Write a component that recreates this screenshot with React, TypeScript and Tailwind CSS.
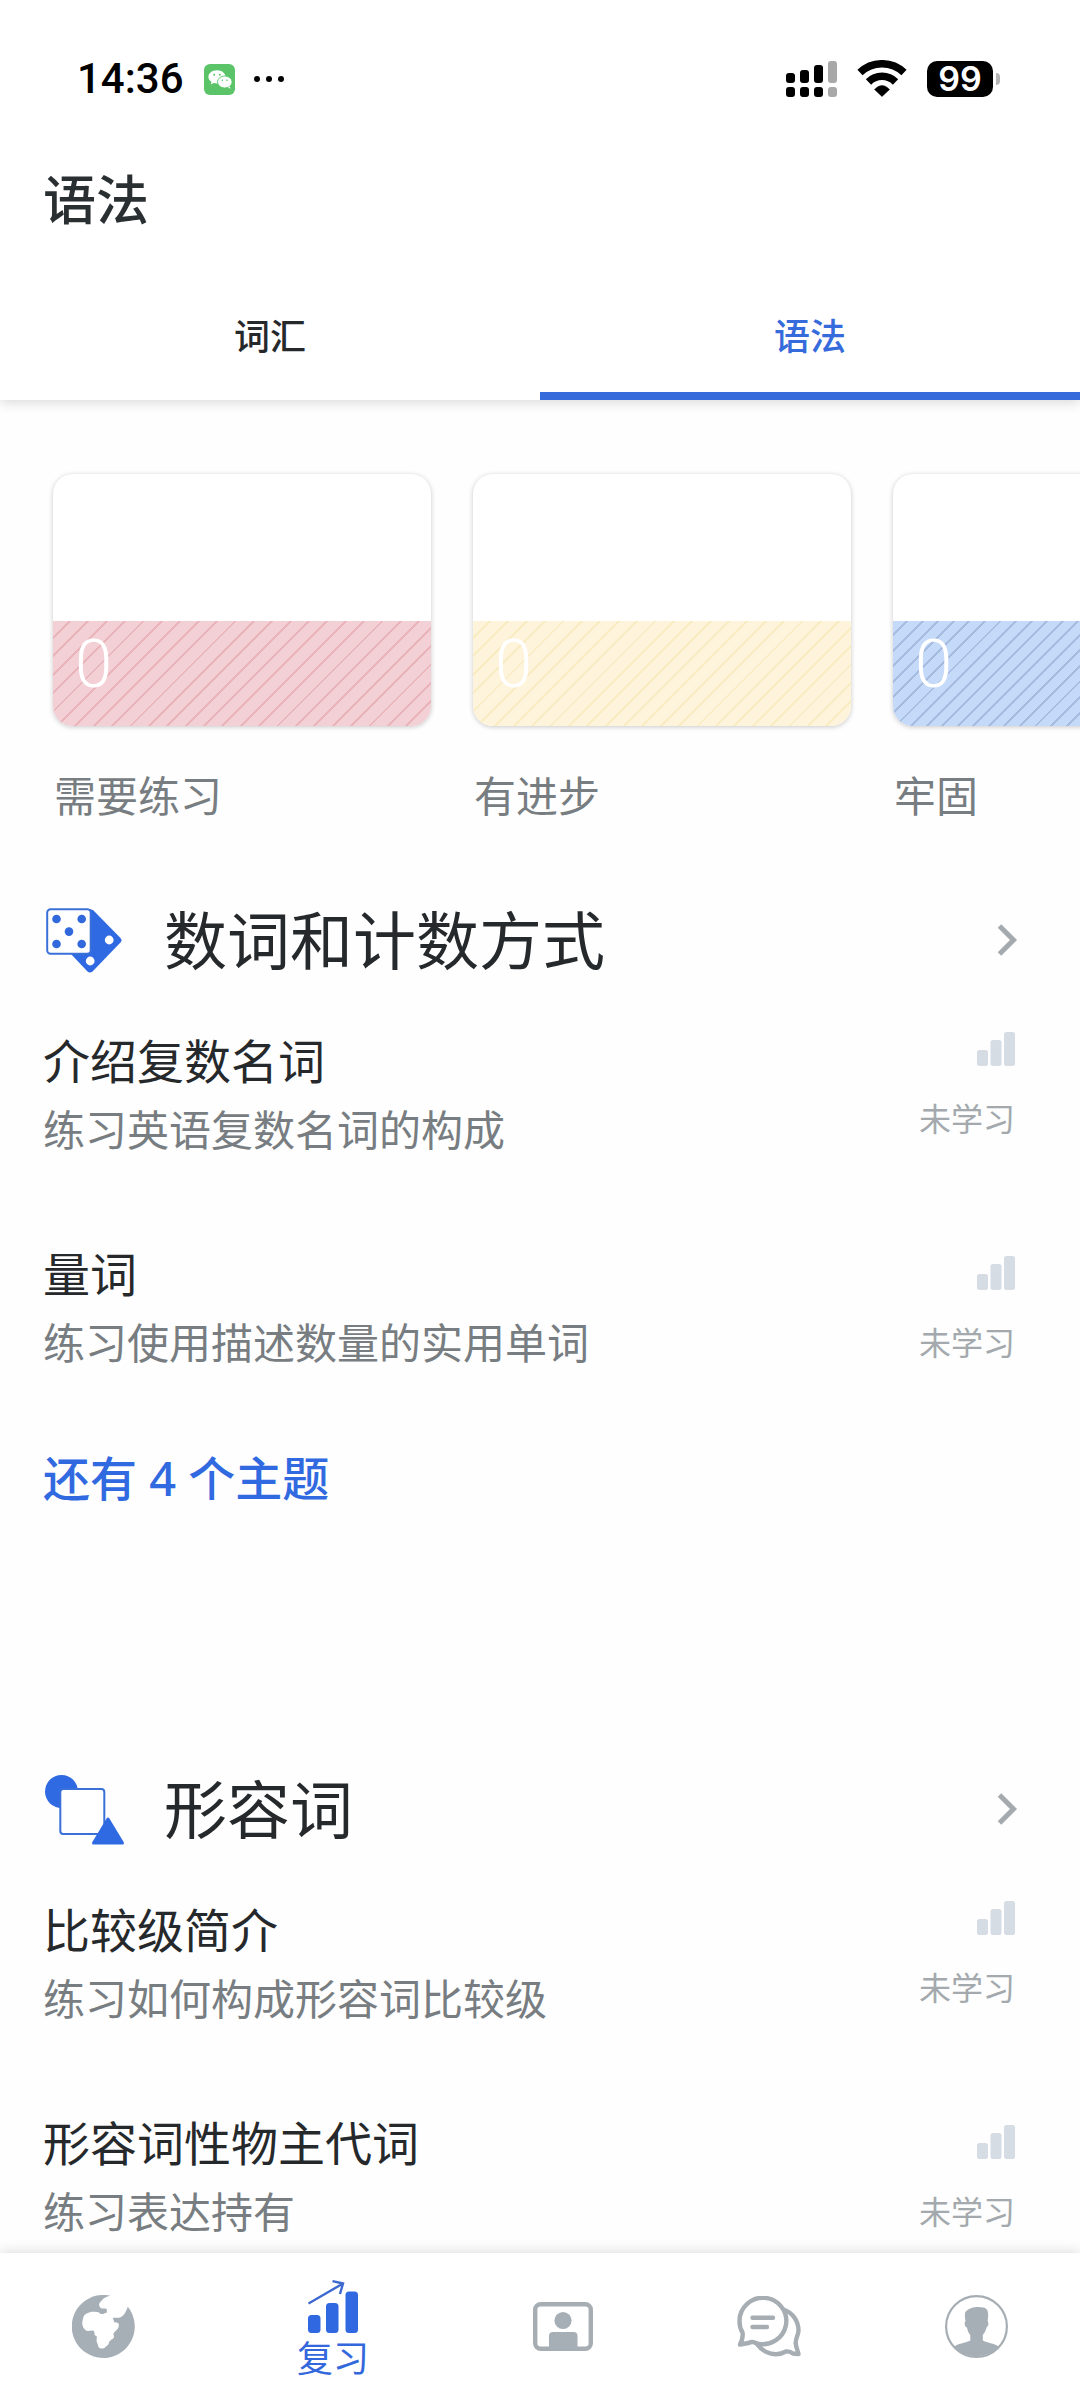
import React from "react";
import clsx from "clsx";

type Topic = { title: string; desc: string };

const levels = [
  {
    label: "需要练习",
    count: 0,
    fill: "bg-[repeating-linear-gradient(135deg,#f3d0d5_0px,#f3d0d5_11px,#e9b5ba_11px,#e9b5ba_13px)]",
  },
  {
    label: "有进步",
    count: 0,
    fill: "bg-[repeating-linear-gradient(135deg,#fef3db_0px,#fef3db_11px,#f9ebc2_11px,#f9ebc2_13px)]",
  },
  {
    label: "牢固",
    count: 0,
    fill: "bg-[repeating-linear-gradient(135deg,#c5d9f8_0px,#c5d9f8_9px,#a6bce0_9px,#a6bce0_11px)]",
  },
];

const numberTopics: Topic[] = [
  { title: "介绍复数名词", desc: "练习英语复数名词的构成" },
  { title: "量词", desc: "练习使用描述数量的实用单词" },
];

const adjectiveTopics: Topic[] = [
  { title: "比较级简介", desc: "练习如何构成形容词比较级" },
  { title: "形容词性物主代词", desc: "练习表达持有" },
];

function WeChatIcon() {
  return (
    <svg width="31" height="31" viewBox="0 0 31 31" aria-hidden="true">
      <rect width="31" height="31" rx="6" fill="#5bc468" />
      <path
        d="M13 6.2c-4.8 0-8.6 2.9-8.6 6.6 0 2.1 1.2 3.9 3.1 5.1l-.8 2.5 2.9-1.5c1.1.3 2.2.5 3.4.5 4.8 0 8.6-2.9 8.6-6.6S17.8 6.2 13 6.2z"
        fill="#fff"
      />
      <ellipse cx="20.8" cy="18" rx="7.3" ry="6" fill="#fff" stroke="#5bc468" strokeWidth="0.9" />
      <path d="M23.5 22.5l2.5.3.3 2.3z" fill="#fff" />
      <circle cx="10.2" cy="10.7" r="1" fill="#5bc468" />
      <circle cx="15.8" cy="10.7" r="1" fill="#5bc468" />
      <circle cx="18.4" cy="16.3" r="0.8" fill="#5bc468" />
      <circle cx="23" cy="16.3" r="0.8" fill="#5bc468" />
    </svg>
  );
}

function SignalIcon() {
  return (
    <svg width="51" height="36" viewBox="0 0 51 36" aria-hidden="true">
      <g fill="#000">
        <rect x="0" y="12" width="9" height="10" rx="3" />
        <rect x="14" y="9" width="9" height="13" rx="3" />
        <rect x="28" y="4" width="9" height="18" rx="3" />
        <rect x="0" y="26" width="9" height="10" rx="3" />
        <rect x="14" y="26" width="9" height="10" rx="3" />
        <rect x="28" y="26" width="9" height="10" rx="3" />
      </g>
      <g fill="#a8a8a8">
        <rect x="42" y="0" width="9" height="22" rx="3" />
        <rect x="42" y="26" width="9" height="10" rx="3" />
      </g>
    </svg>
  );
}

function WifiIcon() {
  return (
    <svg width="50" height="38" viewBox="0 0 50 38" fill="none" aria-hidden="true">
      <path d="M3 12.5A32 32 0 0 1 47 12.5" stroke="#000" strokeWidth="7.5" />
      <path d="M11.5 22A19 19 0 0 1 38.5 22" stroke="#000" strokeWidth="7.5" />
      <path d="M17.5 29.500Q25 21.500 32.500 29.500L25 36.500z" fill="#000" stroke="#000" strokeWidth="0.5" />
    </svg>
  );
}

function DiceIcon() {
  return (
    <svg width="77" height="66" viewBox="-1 0 77 66" aria-hidden="true">
      <path
        d="M42 2Q45.5 1.5 47.5 3.5L74.5 31Q76.5 33.3 74.5 35.5L46.5 64.5Q44 66.5 41.5 64.5L24 46z"
        fill="#2f6ae3"
      />
      <rect x="1.2" y="2.2" width="43.5" height="44.5" rx="3.5" fill="#fff" stroke="#3a70d8" strokeWidth="2" />
      <g fill="#3169dc">
        <circle cx="10.5" cy="12" r="4.3" />
        <circle cx="35.7" cy="12" r="4.3" />
        <circle cx="23" cy="24.6" r="4.3" />
        <circle cx="10.5" cy="37" r="4.3" />
        <circle cx="35.7" cy="37" r="4.3" />
      </g>
      <circle cx="63.2" cy="33" r="4.4" fill="#fff" />
      <circle cx="44.2" cy="54" r="4.4" fill="#fff" />
    </svg>
  );
}

function ShapesIcon() {
  return (
    <svg width="80" height="71" viewBox="1 0 80 71" aria-hidden="true">
      <circle cx="17.5" cy="17.5" r="16.5" fill="#2f6ae3" />
      <rect x="16.3" y="15" width="44" height="45" rx="3" fill="#fff" stroke="#3a70d8" strokeWidth="2" />
      <path d="M64 45L78.5 69H49.5z" fill="#2f6ae3" stroke="#2f6ae3" strokeWidth="3" strokeLinejoin="round" />
    </svg>
  );
}

function ChevronIcon() {
  return (
    <svg width="21" height="34" viewBox="0 0 21 34" fill="none" className="overflow-visible" aria-hidden="true">
      <path d="M4.5 3L18.5 17L4.5 31" stroke="#a5aaae" strokeWidth="5" />
    </svg>
  );
}

function BarsIcon() {
  return (
    <svg width="38" height="34" viewBox="0 0 38 34" fill="#d6dce4" aria-hidden="true">
      <rect x="0" y="18" width="11" height="16" rx="2.5" />
      <rect x="13.5" y="8" width="11" height="26" rx="2.5" />
      <rect x="27" y="0" width="11" height="34" rx="2.5" />
    </svg>
  );
}

function GlobeIcon() {
  return (
    <svg width="63" height="63" viewBox="0 0 63 63" aria-hidden="true">
      <path
        d="M38.5 .8C34 1.6 31 3.5 29.6 5.7C26.5 8 26.5 11 28.5 12.7C30 14.3 31.5 13 34.8 14V17.7C32 18 31.5 19.5 29.3 19C27 18.5 27.5 17 25 17C22 16.7 20.5 16.4 18 17.2C13.5 18.3 11.5 20.5 11.2 23C10.7 25 10 27 10.3 29C10.7 32 12 34.5 14.5 35.7C17 36.7 20 34.5 21.7 36C23.3 37.6 21.7 39 23 40.5C26 41 24.5 43 24.5 45C24.5 47.5 26 49 26.3 51.5C27 54 31.5 54 33 52.5C34.5 50.5 36.5 50.5 36.8 48.3C36.8 46.5 38 46 39.5 44.5C42 43.5 42.5 41.5 41.5 40C41 37.5 43 37 44.5 35C46.5 33.5 47 31.5 46.7 29C46.3 27 43.5 28 41.7 27C42.5 25 41 25 41 23C43.5 22.3 45.5 23.3 48 22.5C52 21 54 16.5 55.8 11.7A31.5 31.5 0 1 1 38.5 .8z"
        fill="#a6aeb6"
      />
    </svg>
  );
}

function ReviewIcon() {
  return (
    <svg width="50" height="53" viewBox="0 0 50 53" aria-hidden="true">
      <g fill="#3068e2">
        <rect x="0" y="35" width="12.5" height="18" rx="3.5" />
        <rect x="18" y="23" width="12.5" height="30" rx="3.5" />
        <rect x="37.5" y="11.5" width="12.5" height="41.5" rx="3.5" />
      </g>
      <path d="M.5 23.5L35 3.5M24.5 1.2L35 3.5L32 14" fill="none" stroke="#3c68cf" strokeWidth="2.4" />
    </svg>
  );
}

function TeacherIcon() {
  return (
    <svg width="60" height="49" viewBox="0 0 60 49" aria-hidden="true">
      <rect x="2.2" y="2.2" width="55.6" height="44.6" rx="5.5" fill="none" stroke="#a6aeb4" strokeWidth="4.4" />
      <circle cx="30" cy="18.5" r="8.6" fill="#a6aeb6" />
      <path d="M16 47V34Q16 30 20 30H40.5Q44.5 30 44.5 34V47z" fill="#a6aeb6" />
    </svg>
  );
}

function ChatIcon() {
  return (
    <svg
      width="65"
      height="61"
      viewBox="0 0 65 61"
      fill="none"
      stroke="#a6aeb4"
      strokeWidth="4.4"
      strokeLinecap="round"
      strokeLinejoin="round"
      aria-hidden="true"
    >
      <path d="M5.5 36.5C3.4 33.2 2.5 29 2.5 25A23.4 23.2 0 1 1 19.5 47.3Q15.5 44.7 11.5 47L3 48.5Q6.5 41 5.5 36.5z" />
      <path d="M47.5 14C56 17 61.5 25.5 61.5 34.5C61.5 39 58.5 42 58.7 47C59 51 60.5 54 61.5 58L56 57.5Q53 55 49 55.5C40 60.5 28 59 19.5 47.5" />
      <path d="M15.5 21.7H36M15.5 31H30" />
    </svg>
  );
}

function ProfileIcon() {
  return (
    <svg width="63" height="63" viewBox="0 0 63 63" aria-hidden="true">
      <circle cx="31.5" cy="31.5" r="30.4" fill="none" stroke="#a6aeb4" strokeWidth="2.2" />
      <path
        d="M20.5 26C19.5 21 19.5 17 21.5 16C24 12.5 33 11 38 12.5C43.5 13.5 43.8 18 42.6 26C44 27.5 43.5 31.5 41.5 32.5C40.5 36.5 39 38.5 37.8 40V45.5C42 48 49 48 54 51.7A31.5 31.5 0 0 1 9 51.7C14 48 21 48 25.3 45.5V40C23.5 38 22.5 35.5 22 32.5C19.5 31.5 19 28 20.5 26z"
        fill="#a6aeb6"
      />
    </svg>
  );
}

function StatusBar() {
  return (
    <div className="flex h-[110px] items-center justify-between pt-12 pr-20 pl-[77px]">
      <div className="flex items-center">
        <span className="font-[Roboto] text-[42px] leading-[62px] font-medium text-black">
          14:36
        </span>
        <div className="ml-5 flex items-center gap-[19px]">
          <WeChatIcon />
          <div className="flex gap-1.5">
            <span className="size-1.5 rounded-full bg-black" />
            <span className="size-1.5 rounded-full bg-black" />
            <span className="size-1.5 rounded-full bg-black" />
          </div>
        </div>
      </div>
      <div className="flex items-center gap-5">
        <SignalIcon />
        <WifiIcon />
        <div className="flex items-center gap-[3px]">
          <span className="flex h-9 w-[66px] items-center justify-center rounded-[10px] bg-black font-[Inter] text-[34px] leading-9 font-semibold text-white">
            99
          </span>
          <span className="h-3 w-1 rounded-r-full bg-[#b5b5b5]" />
        </div>
      </div>
    </div>
  );
}

function LevelCards() {
  return (
    <ul className="flex gap-[42px] overflow-x-auto px-[53px] pt-[74px] [scrollbar-width:none]">
      {levels.map((level) => (
        <li key={level.label} className="w-[378px] shrink-0">
          <div className="flex h-[252px] flex-col justify-end overflow-hidden rounded-[20px] bg-white shadow-[0_1px_5px_rgba(0,0,0,0.22)]">
            <div className={clsx("flex h-[105px] items-start px-[22px] pt-2", level.fill)}>
              <span className="font-[Roboto] text-[67px] leading-[70px] font-light text-white">
                {level.count}
              </span>
            </div>
          </div>
          <p className="mt-10 px-px text-[42px] leading-[60px] text-[#777d81]">{level.label}</p>
        </li>
      ))}
    </ul>
  );
}

function TopicRow({ title, desc }: Topic) {
  return (
    <li className="flex items-center justify-between first:items-start">
      <div>
        <h3 className="text-[47px] leading-[70px] text-[#26292b]">{title}</h3>
        <p className="text-[42px] leading-[68px] text-[#777d81]">{desc}</p>
      </div>
      <div className="flex flex-col items-end gap-9 py-1.5 pr-px">
        <BarsIcon />
        <span className="text-[32px] leading-[34px] text-[#a3a9ad]">未学习</span>
      </div>
    </li>
  );
}

function Section({
  icon,
  title,
  topics,
  more,
}: {
  icon: React.ReactNode;
  title: string;
  topics: Topic[];
  more?: string;
}) {
  return (
    <section className="pr-16 pl-[43px]">
      <a href="#" className="flex h-20 items-center">
        <span className="flex w-[121px] shrink-0 pl-0.5">{icon}</span>
        <h2 className="grow text-[63px] leading-[80px] text-[#26292b]">{title}</h2>
        <ChevronIcon />
      </a>
      <ul className="mt-[46px] flex flex-col gap-[75px]">
        {topics.map((topic) => (
          <TopicRow key={topic.title} {...topic} />
        ))}
      </ul>
      {more && (
        <a href="#" className="mt-[66px] block text-[47px] leading-[70px] font-medium text-[#316ae0]">
          {more}
        </a>
      )}
    </section>
  );
}

function BottomNav() {
  return (
    <nav className="z-10 mt-auto flex h-[147px] bg-white shadow-[0_-2px_12px_rgba(0,0,0,0.12)]">
      <a href="#" aria-label="学习" className="flex flex-1 items-center justify-center">
        <GlobeIcon />
      </a>
      <a
        href="#"
        aria-current="page"
        className="flex w-[252px] flex-col items-center justify-center gap-1.5 pt-1.5"
      >
        <ReviewIcon />
        <span className="text-[36px] leading-10 text-[#3368dc]">复习</span>
      </a>
      <a href="#" aria-label="课程" className="flex flex-1 items-center justify-center">
        <TeacherIcon />
      </a>
      <a href="#" aria-label="社区" className="flex flex-1 items-center justify-center">
        <ChatIcon />
      </a>
      <a href="#" aria-label="我" className="flex flex-1 items-center justify-center">
        <ProfileIcon />
      </a>
    </nav>
  );
}

export default function App() {
  return (
    <div className="flex min-h-screen flex-col bg-[#fefefe] font-['Noto_Sans','Noto_Sans_CJK_SC',sans-serif]">
      <header className="bg-white shadow-[0_2px_12px_rgba(0,0,0,0.16)]">
        <StatusBar />
        <h1 className="mt-[54px] px-[43px] text-[53px] leading-[72px] font-medium text-[#2a2f32]">
          语法
        </h1>
        <div role="tablist" className="mt-[38px] flex h-[126px]">
          <button
            role="tab"
            aria-selected="false"
            className="flex-1 border-b-8 border-transparent pt-2 text-[36px] font-medium text-[#26292b]"
          >
            词汇
          </button>
          <button
            role="tab"
            aria-selected="true"
            className="flex-1 border-b-8 border-[#366bdc] pt-2 text-[36px] font-medium text-[#366bdc]"
          >
            语法
          </button>
        </div>
      </header>
      <main>
        <LevelCards />
        <div className="mt-[74px] flex flex-col gap-64">
          <Section
            icon={<DiceIcon />}
            title="数词和计数方式"
            topics={numberTopics}
            more="还有 4 个主题"
          />
          <Section icon={<ShapesIcon />} title="形容词" topics={adjectiveTopics} />
        </div>
      </main>
      <BottomNav />
    </div>
  );
}
